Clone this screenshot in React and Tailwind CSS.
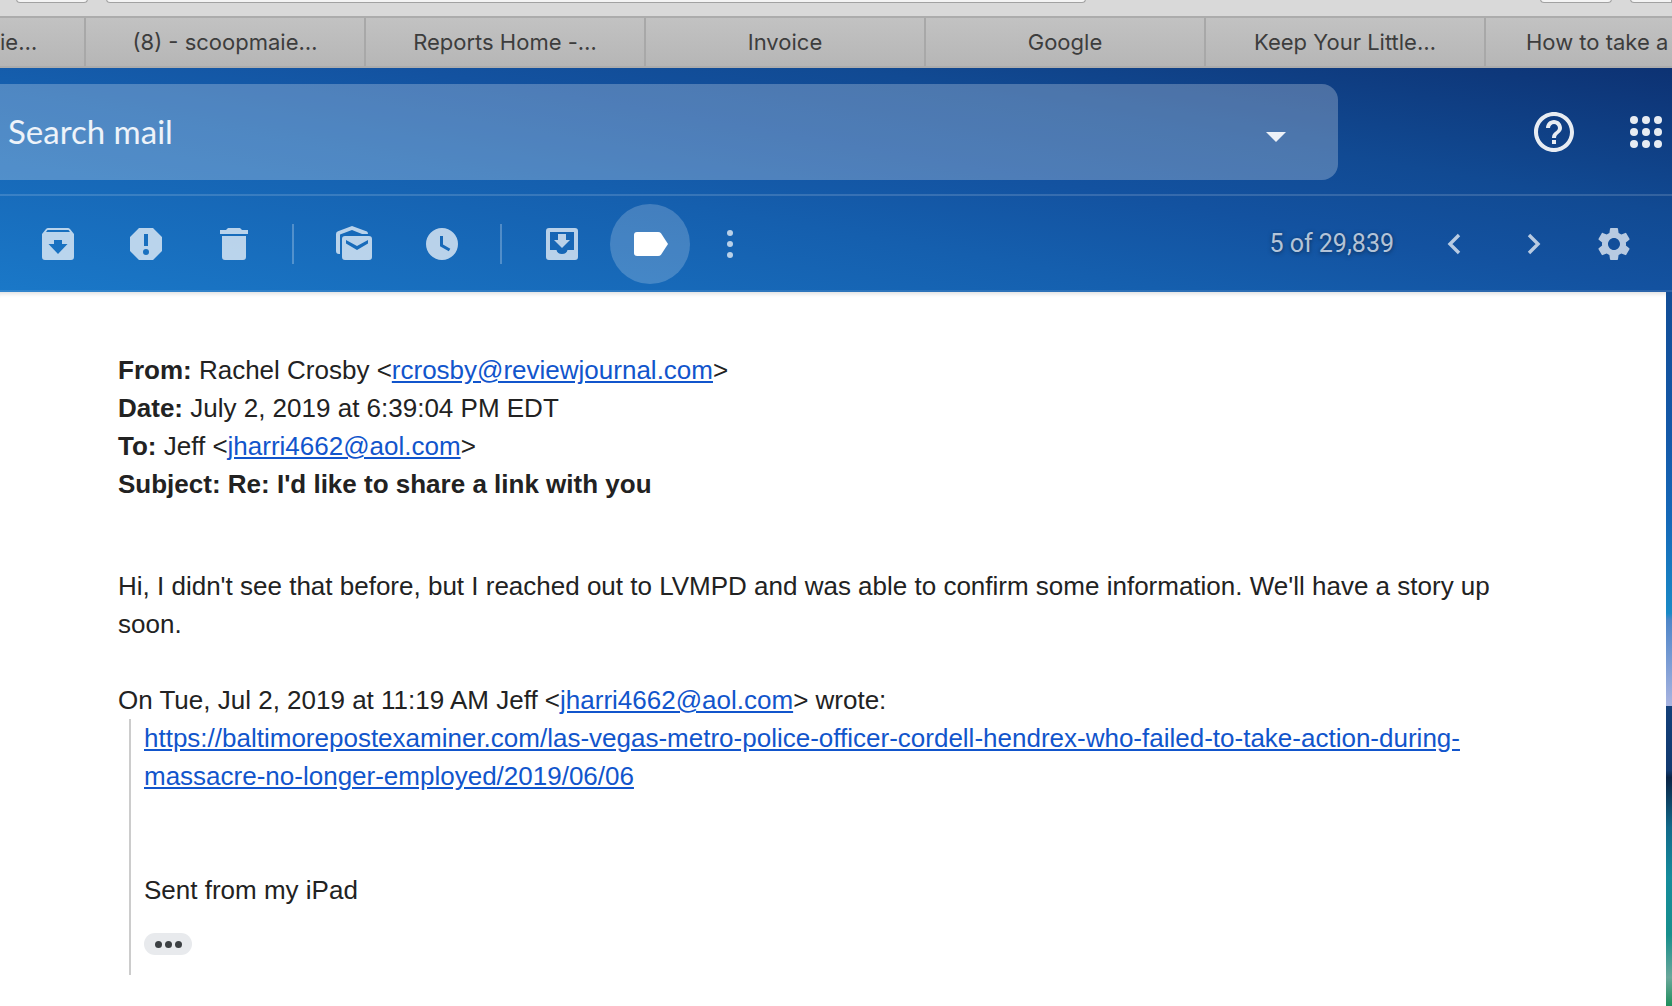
// src/App.jsx
import React, { useState } from "react";
import { MdHelpOutline, MdSettings } from "react-icons/md";

const TABS = ["(8) - scoopmaie…", "Reports Home -…", "Invoice", "Google", "Keep Your Little…"];

const AOL = "jharri4662@aol.com";
const STORY_URL =
  "https://baltimorepostexaminer.com/las-vegas-metro-police-officer-cordell-hendrex-who-failed-to-take-action-during-massacre-no-longer-employed/2019/06/06";

// === ICONS (all on a 40x40 grid) ===
function Icon({ children, className = "" }) {
  return (
    <svg viewBox="0 0 40 40" className={`w-10 h-10 ${className}`} fill="currentColor" fillRule="evenodd" aria-hidden="true">
      {children}
    </svg>
  );
}

const ArchiveIcon = () => (
  <Icon>
    <path d="M4 10 L8 5 Q9 4 10 4 H30 Q31 4 32 5 L36 10 V33 a3 3 0 0 1 -3 3 H7 a3 3 0 0 1 -3 -3 Z M9.5 6 L8 8 H32 L30.5 6 Z M16 16 V20 H10.5 L20 30 L29.5 20 H24 V16 Z" />
  </Icon>
);

const SpamIcon = () => (
  <Icon>
    <path d="M13 4 H27 L36 13 V27 L27 36 H13 L4 27 V13 Z M18 10 V22 H22 V10 Z M20 25 a3 3 0 1 0 0 6 a3 3 0 1 0 0 -6 Z" />
  </Icon>
);

const TrashIcon = () => (
  <Icon>
    <path d="M6 6 H12 L14 4 H26 L28 6 H34 V10 H6 Z M8 12 H32 V33 a3 3 0 0 1 -3 3 H11 a3 3 0 0 1 -3 -3 Z" />
  </Icon>
);

const UnreadIcon = () => (
  <Icon>
    <path d="M18 2 L33 7.5 Q34 8 34 10 H28 L18 6 L6 10.5 V30 H5 a3 3 0 0 1 -3 -3 V10 Q2 8 4 7.3 Z" />
    <path d="M11 12 H35 a3 3 0 0 1 3 3 V33 a3 3 0 0 1 -3 3 H11 a3 3 0 0 1 -3 -3 V15 a3 3 0 0 1 3 -3 Z M12 16 V19.5 L23 26 L34 19.5 V16 L23 22 Z" />
  </Icon>
);

const SnoozeIcon = () => (
  <Icon>
    <path d="M20 4 a16 16 0 1 0 0 32 a16 16 0 1 0 0 -32 Z M18 12 V22.3 L26.8 27.2 L28.3 24.8 L21 20.5 V12 Z" />
  </Icon>
);

const MoveIcon = () => (
  <Icon>
    <path d="M7 4 H33 a3 3 0 0 1 3 3 V33 a3 3 0 0 1 -3 3 H7 a3 3 0 0 1 -3 -3 V7 a3 3 0 0 1 3 -3 Z M8 8 V26 H14.5 a5.6 5 0 0 0 11 0 H32 V8 Z" />
    <path d="M16 10 H24 V16 H28 L20 24 L12 16 H16 Z" />
  </Icon>
);

const LabelIcon = () => (
  <Icon>
    <path d="M7 8 H28 Q30 8 31 9.3 L38 20 L31 30.7 Q30 32 28 32 H7 a3 3 0 0 1 -3 -3 V11 a3 3 0 0 1 3 -3 Z" />
  </Icon>
);

const MoreIcon = () => (
  <Icon>
    <circle cx="20" cy="9" r="3" />
    <circle cx="20" cy="20" r="3" />
    <circle cx="20" cy="31" r="3" />
  </Icon>
);

const AppsIcon = () => (
  <Icon>
    {[8, 20, 32].map((y) => [8, 20, 32].map((x) => <circle key={`${x}-${y}`} cx={x} cy={y} r="4" />))}
  </Icon>
);

const Chevron = ({ d }) => (
  <Icon>
    <path d={d} fill="none" stroke="currentColor" strokeWidth="3.4" />
  </Icon>
);

// === SHARED PIECES ===
function ToolButton({ label, active = false, children }) {
  return (
    <button
      aria-label={label}
      className={`grid place-items-center shrink-0 rounded-full ${
        active ? "w-20 h-20 bg-white/20 text-white" : "w-10 h-10 text-white/70"
      }`}
    >
      {children}
    </button>
  );
}

const Divider = () => <span className="w-0.5 h-10 shrink-0 bg-white/25" />;

function MailLink({ href, children }) {
  return (
    <a href={href} className="text-[#1155cc] underline">
      {children}
    </a>
  );
}

function BrowserChrome() {
  const field = "h-1 -mt-px rounded-b-lg border border-t-0 border-[#a2a2a2] bg-[#f4f4f4]";
  return (
    <div className="font-['Inter',sans-serif]">
      <div className="flex h-4 bg-[#d9d9d9] pl-4">
        <div className={`${field} w-[72px]`} />
        <div className={`${field} w-[980px] ml-[18px]`} />
        <div className={`${field} w-[72px] ml-auto`} />
        <div className={`${field} w-[42px] ml-[18px] rounded-br-none`} />
      </div>
      <nav className="flex h-[52px] overflow-hidden border-y-2 border-[#acacac] bg-linear-to-b from-[#c2c2c2] to-[#b6b6b6] text-[22px] leading-[48px] text-[#3d3d3d] whitespace-nowrap">
        <a href="#tab" className="w-[86px] shrink-0 border-r-2 border-[#a8a8a8]">
          ie…
        </a>
        {TABS.map((t) => (
          <a key={t} href="#tab" className="w-[280px] shrink-0 border-r-2 border-[#a8a8a8] text-center">
            {t}
          </a>
        ))}
        <a href="#tab" className="flex-1 pl-10">
          How to take a
        </a>
      </nav>
    </div>
  );
}

function Header() {
  const [query, setQuery] = useState("");

  return (
    <header className="bg-[linear-gradient(10deg,#1a78c8_0%,#155fae_40%,#1352a0_57%,#114a93_72%,#0d3273_100%)]">
      {/* Search row */}
      <div className="flex items-center justify-between border-b-2 border-white/15 pt-4 pb-[14px]">
        <form
          className="flex items-center w-4/5 h-24 rounded-r-2xl bg-white/25 pl-2 pr-[42px]"
          onSubmit={(e) => e.preventDefault()}
        >
          <input
            type="text"
            aria-label="Search mail"
            placeholder="Search mail"
            value={query}
            onChange={(e) => setQuery(e.target.value)}
            className="flex-1 min-w-0 bg-transparent outline-none font-['Lato',sans-serif] text-[33px] text-white placeholder:text-white/90"
          />
          <button aria-label="Search options" className="text-white/90">
            <Icon>
              <path d="M10 20 H30 L20 30 Z" />
            </Icon>
          </button>
        </form>
        <div className="flex items-center gap-12 pr-1.5 text-white/90">
          <button aria-label="Support">
            <MdHelpOutline className="w-12 h-12" />
          </button>
          <button aria-label="Google apps">
            <AppsIcon />
          </button>
        </div>
      </div>

      {/* Message toolbar */}
      <div className="flex items-center justify-between h-24 px-[38px] shadow-[inset_0_-2px_0_rgba(255,255,255,0.1)]">
        <div className="flex items-center">
          <div className="flex items-center gap-12 pr-[38px]">
            <ToolButton label="Archive"><ArchiveIcon /></ToolButton>
            <ToolButton label="Report spam"><SpamIcon /></ToolButton>
            <ToolButton label="Delete"><TrashIcon /></ToolButton>
          </div>
          <Divider />
          <div className="flex items-center gap-12 pl-10 pr-[38px]">
            <ToolButton label="Mark as unread"><UnreadIcon /></ToolButton>
            <ToolButton label="Snooze"><SnoozeIcon /></ToolButton>
          </div>
          <Divider />
          <div className="flex items-center pl-10">
            <ToolButton label="Move to"><MoveIcon /></ToolButton>
            <div className="pl-7 pr-5">
              <ToolButton label="Labels" active><LabelIcon /></ToolButton>
            </div>
            <ToolButton label="More"><MoreIcon /></ToolButton>
          </div>
        </div>
        <div className="flex items-center gap-10">
          <span className="font-['Roboto',sans-serif] text-[25px] text-white/70 [text-shadow:0_1px_4px_rgba(0,0,0,0.5)]">
            5 of 29,839
          </span>
          <div className="flex gap-10">
            <ToolButton label="Newer"><Chevron d="M25 11 L16 20 L25 29" /></ToolButton>
            <ToolButton label="Older"><Chevron d="M15 11 L24 20 L15 29" /></ToolButton>
          </div>
          <ToolButton label="Settings"><MdSettings className="w-10 h-10" /></ToolButton>
        </div>
      </div>
    </header>
  );
}

function Message() {
  return (
    <article className="flex-1 bg-white pt-[59px] pl-[118px] pr-40 pb-[30px] text-[26px] leading-[38px] text-[#222222] shadow-[inset_0_6px_4px_-4px_rgba(0,0,0,0.12)]">
      <p><b>From:</b> Rachel Crosby &lt;<MailLink href="mailto:rcrosby@reviewjournal.com">rcrosby@reviewjournal.com</MailLink>&gt;</p>
      <p><b>Date:</b> July 2, 2019 at 6:39:04 PM EDT</p>
      <p><b>To:</b> Jeff &lt;<MailLink href={`mailto:${AOL}`}>{AOL}</MailLink>&gt;</p>
      <p className="font-bold">Subject: Re: I'd like to share a link with you</p>

      <p className="mt-16">
        Hi, I didn't see that before, but I reached out to LVMPD and was able to confirm some information. We'll have a
        story up soon.
      </p>

      <p className="mt-[38px]">
        On Tue, Jul 2, 2019 at 11:19 AM Jeff &lt;<MailLink href={`mailto:${AOL}`}>{AOL}</MailLink>&gt; wrote:
      </p>

      <blockquote className="ml-[11px] pl-[13px] pb-5 border-l-2 border-[#cccccc]">
        <p><MailLink href={STORY_URL}>{STORY_URL}</MailLink></p>
        <p className="mt-[76px]">Sent from my iPad</p>
        <button
          aria-label="Show trimmed content"
          className="mt-6 flex items-center justify-center gap-[3px] w-12 h-[22px] rounded-full bg-[#e8eaed]"
        >
          {[0, 1, 2].map((i) => (
            <span key={i} className="w-[7px] h-[7px] rounded-full bg-[#3c4043]" />
          ))}
        </button>
      </blockquote>
    </article>
  );
}

export default function App() {
  return (
    <div className="flex flex-col min-h-screen overflow-hidden font-['Liberation_Sans',sans-serif]">
      <BrowserChrome />
      <Header />
      {/* The lake wallpaper shows through beside the message */}
      <main className="flex flex-1 pr-1.5 bg-[linear-gradient(to_bottom,#124d96_0%,#1459a8_20%,#1569b8_32%,#1a8ac6_45%,#4f86c8_46%,#a9b4e0_58%,#123f78_58%,#123a70_67%,#0a2446_68%,#126a8a_75%,#158c9c_82%,#178f8c_90%,#6aa79a_96%,#1f8f5c_100%)]">
        <Message />
      </main>
    </div>
  );
}
